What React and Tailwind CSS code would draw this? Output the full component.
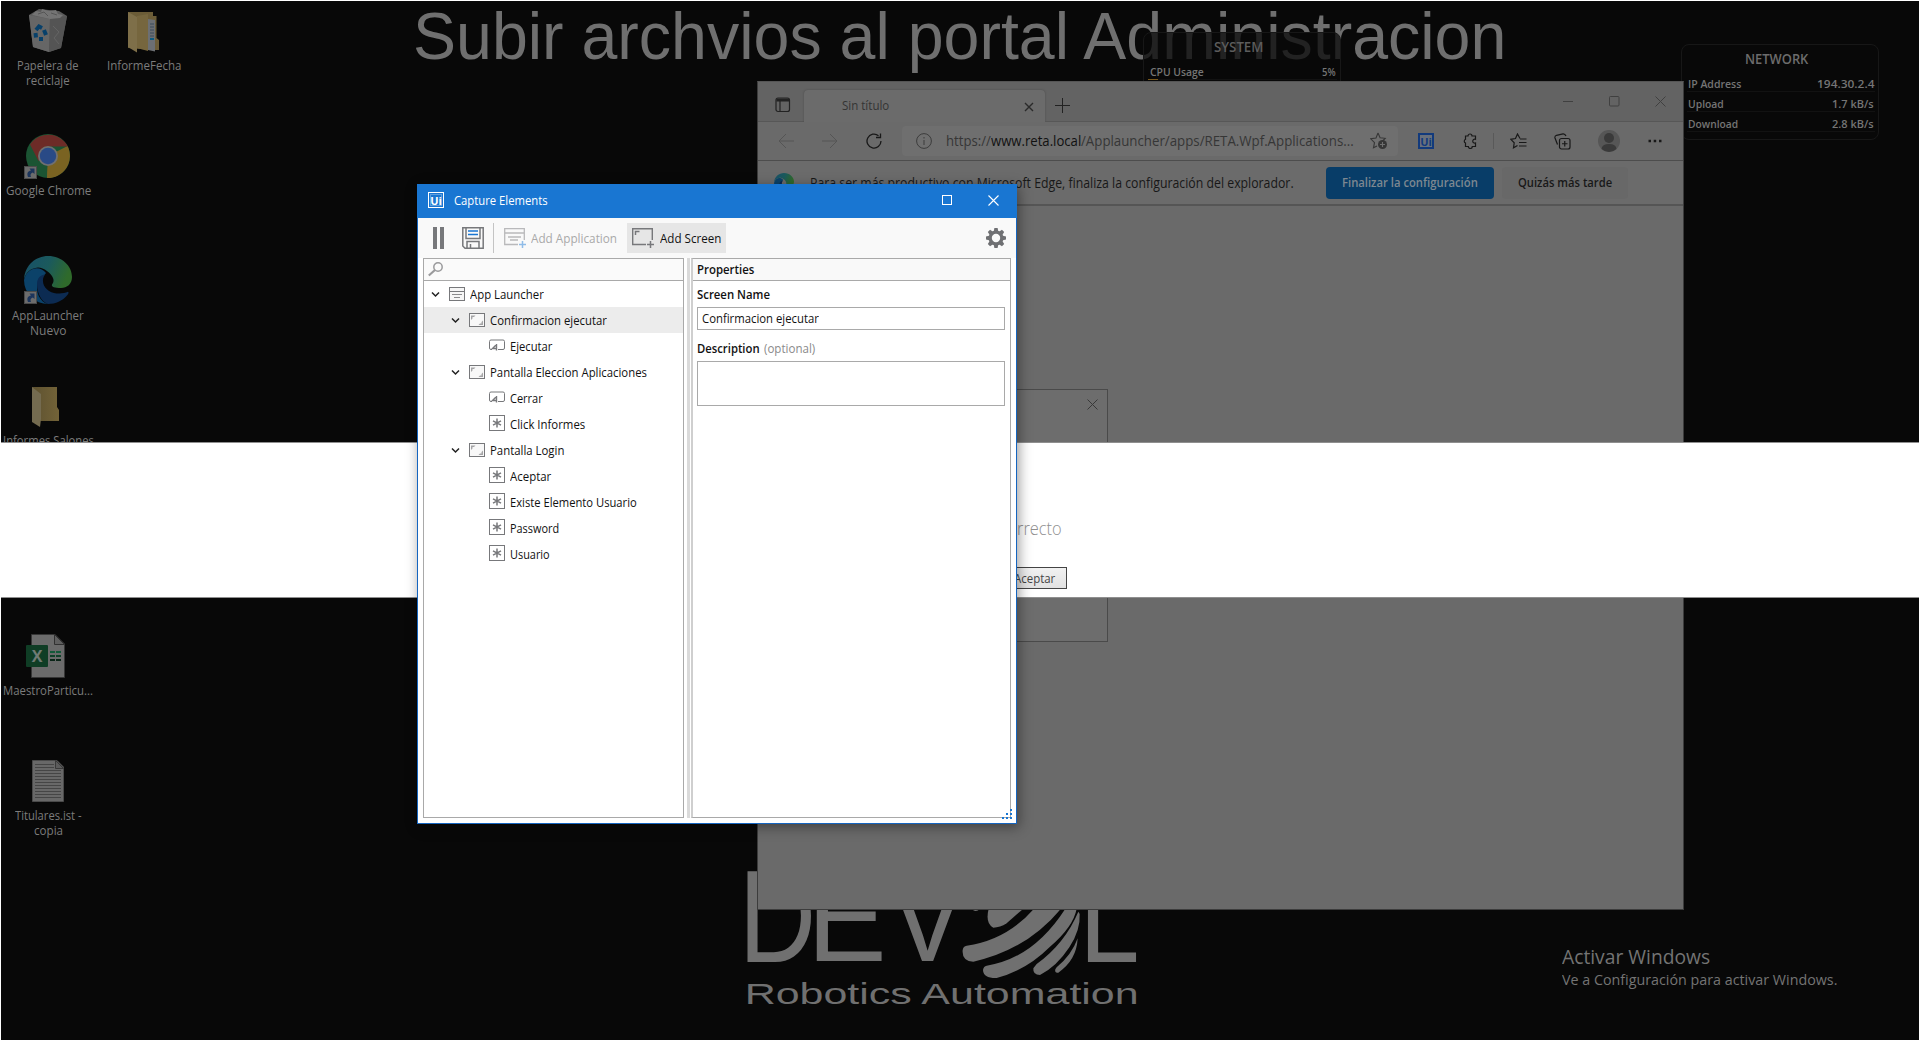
import React, { useLayoutEffect, useRef, useState } from "react";

/* Text squeezed or stretched horizontally to a given width. */
function Fit({ w, className = "", children }) {
  const ref = useRef(null);
  const [scale, setScale] = useState(1);
  useLayoutEffect(() => {
    if (ref.current.offsetWidth) setScale(w / ref.current.offsetWidth);
  }, [w]);
  return (
    <span className={"block shrink-0 whitespace-nowrap " + className} style={{ width: w }}>
      <span ref={ref} className="inline-block origin-left" style={{ transform: `scaleX(${scale})` }}>
        {children}
      </span>
    </span>
  );
}

/* ---------- desktop icons ---------- */
function Shortcut() {
  return (
    <g>
      <rect x="0.5" y="35.5" width="12" height="12" fill="#6c6c6c" stroke="#4a4a4a" />
      <path d="M4 46 C2.5 42 4 40 7 39.5 L5.5 37.5 H10.5 V43 L8.8 41.6 C6.5 42.5 6 44 7 46Z" fill="#1c355c" />
    </g>
  );
}
function BinIcon() {
  return (
    <svg width="48" height="48" viewBox="0 0 48 48">
      <path d="M5 9 L15 3 L35 5 L43 10 L37 42 L25 46 L9 41Z" fill="#5a5a5a" />
      <path d="M5 9 L26 13 L25 46 L9 41Z" fill="#666" />
      <path d="M26 13 L43 10 L37 42 L25 46Z" fill="#545454" />
      <path d="M8 9 L12 5 L17 6 L18 3 L25 5 L32 4 L34 8 L39 9 L36 12 L26 13Z" fill="#747474" />
      <path d="M14 8 L20 6 L24 10 M27 7 L33 9" stroke="#555" fill="none" />
      <path d="M29 20 L35 26 L30 32 L35 38" stroke="#646464" fill="none" />
      <g fill="none" stroke="#07406a" strokeWidth="4">
        <path d="M12 24 L15 20.500 L18 22" />
        <path d="M20 24 L22 29" />
        <path d="M19 33 L15 33" />
        <path d="M11.500 27 L12 31.500" />
      </g>
    </svg>
  );
}
function FolderIcon({ docs }) {
  return docs ? (
    <svg width="48" height="48" viewBox="0 0 48 48">
      <path d="M8 6 H33 V10 H36.500 V32 L39 34 V44 H33 L8 42Z" fill="#6b5c37" />
      <path d="M28 13 L35 14 V45.500 L28 44Z" fill="#6c6f73" />
      <path d="M30 18 H34 M30 21 H34 M30 24 H34 M30 27 H34 M30 30 H34" stroke="#3b4c5c" />
      <path d="M30 33 H34" stroke="#0e5b80" strokeWidth="2" />
      <path d="M17 10 L28 8 V45 L17 42Z" fill="#76663e" />
      <path d="M8 6 L17 11 V46.500 L8 41Z" fill="#7e6f49" />
    </svg>
  ) : (
    <svg width="48" height="48" viewBox="0 0 48 48">
      <defs>
        <linearGradient id="fold" x1="0" x2="1">
          <stop offset="0" stopColor="#5d5130" />
          <stop offset="1" stopColor="#736338" />
        </linearGradient>
      </defs>
      <path d="M8 6 H33 V26 L35 29 V40 H16Z" fill="url(#fold)" />
      <path d="M8 6 L17 13 V38 L16 46 L8 41Z" fill="#746b50" />
    </svg>
  );
}
function ChromeIcon() {
  return (
    <svg width="48" height="48" viewBox="0 0 48 48">
      <circle cx="24" cy="25" r="22" fill="#1b5433" />
      <path d="M24 25 L43.500 15 A22 22 0 0 1 23 47Z" fill="#7a6322" />
      <path d="M14.500 30 L6 13.500 A22 22 0 0 1 43.800 15.500 H24Z" fill="#6d2b27" />
      <path d="M24 34 L29.500 32 L23 47Z" fill="#7a6322" />
      <circle cx="24" cy="25" r="10" fill="#707070" />
      <circle cx="24" cy="25" r="8.200" fill="#294a86" />
      <Shortcut />
    </svg>
  );
}
function EdgeLogo({ size, shortcut, id }) {
  return (
    <svg width={size} height={size} viewBox="0 0 48 48" className="shrink-0">
      <defs>
        <linearGradient id={id} x1="0" x2="1" y2="0.3">
          <stop offset="0" stopColor="#17506a" />
          <stop offset="0.55" stopColor="#1b5a5c" />
          <stop offset="1" stopColor="#2f6a2b" />
        </linearGradient>
      </defs>
      <path d="M0 24 A24 24 0 0 0 24 48 C16 46 11 36 14 27 L22 17 C16 9 3 11 0 24Z" fill="#0b4269" />
      <path
        d="M0 23 C1 9 12 0 24 0 C38 0 48 10 48 21 C48 28 43 32 37 32 C31 32 27 31 28 28.500 C30 26 29.800 24 29 22 C27 17 20 11.500 14 11.500 C6 12 2 17 0 23Z"
        fill={`url(#${id})`}
      />
      <path
        d="M13 28 C13 22 17 18.500 21 18.500 C17 24 19 31 25 35 C31 38.500 39 38 44 35.800 C45.200 36.500 44.500 38 43 39.500 C38 45 32 48 24 48 C18 46 13 38 13 28Z"
        fill="#0c2b52"
      />
      {shortcut && <Shortcut />}
    </svg>
  );
}
function ExcelIcon() {
  return (
    <svg width="48" height="48" viewBox="0 0 48 48">
      <path d="M7.500 3.500 H31 L40.500 13 V46.500 H7.500Z" fill="#6b6b6b" stroke="#363636" />
      <path d="M30.500 3.500 V13.500 H40.500Z" fill="#5f5f5f" stroke="#303030" />
      <rect x="2" y="14" width="22" height="22" rx="1" fill="#0f3d25" />
      <path d="M26 21 H31 M32 21 H37" stroke="#145a3a" strokeWidth="2" />
      <path d="M26 25 H31 M32 25 H37" stroke="#0f4129" strokeWidth="2" />
      <path d="M26 29 H31 M32 29 H37" stroke="#0b2518" strokeWidth="2" />
      <text x="13" y="31" textAnchor="middle" fontFamily="Open Sans, sans-serif" fontWeight="700" fontSize="16" fill="#707a74">
        X
      </text>
    </svg>
  );
}
function TextFileIcon() {
  return (
    <svg width="48" height="48" viewBox="0 0 48 48">
      <path d="M8.500 4.500 H33 L39.500 11 V45.500 H8.500Z" fill="#686868" stroke="#4a4a4a" />
      <path
        d="M11 8.500 H30 M11 11.500 H30 M11 14.500 H37 M11 17.500 H37 M11 20.500 H37 M11 23.500 H37 M11 26.500 H37 M11 29.500 H37 M11 32.500 H37 M11 35.500 H37 M11 38.500 H37 M11 41.500 H37"
        stroke="#454545"
      />
      <path d="M31.500 4.500 V12.500 H39.500Z" fill="#5c5c5c" stroke="#3a3a3a" />
    </svg>
  );
}

function DesktopItem({ icon, lines = [] }) {
  return (
    <div className="flex h-[125px] w-24 shrink-0 flex-col items-center text-[12px] leading-[15px] text-[#7c7c7c]">
      <div className="mb-1 h-12 w-12">{icon}</div>
      {lines.map(([t, w]) => (
        <Fit key={t} w={w}>
          {t}
        </Fit>
      ))}
    </div>
  );
}

/* ---------- wallpaper ---------- */
function Wallpaper() {
  return (
    <>
      <div className="absolute left-[413px] top-[3px] font-['Liberation_Sans',sans-serif] text-[66.500px] leading-[66px] text-[#6f6f6f]">
        <Fit w={1093}>Subir archvios al portal Administracion</Fit>
      </div>
      <svg
        className="absolute left-[740px] top-[860px]"
        width="400"
        height="160"
        viewBox="240 300 1200 480"
        fill="#707070"
        fontFamily="Liberation Sans, Arial, sans-serif"
      >
        <g fontSize="376">
          <text x="236" y="605" fontSize="395" textLength="232" lengthAdjust="spacingAndGlyphs">D</text>
          <text x="441" y="603" textLength="239" lengthAdjust="spacingAndGlyphs">E</text>
          <text x="688" y="603" textLength="230" lengthAdjust="spacingAndGlyphs">V</text>
          <text x="1257" y="605" textLength="182" lengthAdjust="spacingAndGlyphs">L</text>
        </g>
        <text x="254" y="732" fontSize="87" textLength="1182" lengthAdjust="spacingAndGlyphs">
          Robotics Automation
        </text>
        <path d="M935 446 H960 Q950 457 940 451Z" />
        <path d="M986 446 Q975 490 1000 503 Q1020 503 1040 490 L1090 446Z" />
        <path d="M920 557 Q1040 540 1122 446 L1203 446 Q1100 570 940 605 Q905 603 908 570 Q910 558 920 557Z" />
        <path d="M980 617 Q1120 595 1216 446 L1250 446 Q1240 500 1170 560 Q1100 630 1010 654 Q970 655 969 630 Q971 618 980 617Z" />
        <path d="M1130 612 Q1215 550 1255 455 L1259 462 Q1262 510 1228 562 Q1190 620 1140 645 Q1118 645 1120 625Z" />
        <path d="M1190 622 Q1235 585 1253 535 Q1250 600 1195 638 Q1183 640 1186 628Z" />
      </svg>
      <div className="absolute left-[1562px] top-[942px] text-[#747474]">
        <Fit w={148} className="text-[19.500px] leading-[30px]">Activar Windows</Fit>
        <Fit w={275} className="text-[14.500px] leading-[16px]">Ve a Configuración para activar Windows.</Fit>
      </div>
    </>
  );
}

/* ---------- gadgets ---------- */
function GadgetRow({ label, lw, value, vw }) {
  return (
    <div className="flex h-5 items-center justify-between border-b border-[#121212] px-px pt-[5px] text-[11.500px] font-semibold leading-[16px] text-[#757575]">
      <Fit w={lw}>{label}</Fit>
      <Fit w={vw}>{value}</Fit>
    </div>
  );
}
function Gadgets() {
  return (
    <>
      <div className="absolute left-[1143px] top-[32px] h-[90px] w-[198px] rounded-lg border border-[#171717] bg-[#080808]/75 pl-[5px] pr-[3px]">
        <div className="flex h-[27px] items-center justify-center pr-[10px] pt-[2px] text-[13.500px] font-semibold text-[#5c5c5c]">
          <Fit w={49}>SYSTEM</Fit>
        </div>
        <GadgetRow label="CPU Usage" lw={54} value="5%" vw={14} />
        <div className="-ml-px -mt-px h-px w-[10px] bg-[#7a5a1c]" />
      </div>
      <div className="absolute left-[1681px] top-[44px] h-[96px] w-[198px] rounded-lg border border-[#171717] pl-[5px] pr-[3px]">
        <div className="flex h-[27px] items-center justify-center pr-[10px] pt-[2px] text-[13.500px] font-semibold text-[#6c6c6c]">
          <Fit w={63}>NETWORK</Fit>
        </div>
        <GadgetRow label="IP Address" lw={53} value="194.30.2.4" vw={57} />
        <GadgetRow label="Upload" lw={36} value="1.7 kB/s" vw={42} />
        <GadgetRow label="Download" lw={50} value="2.8 kB/s" vw={42} />
      </div>
    </>
  );
}

/* ---------- browser ---------- */
function Glyph({ size = 16, children, className = "", sw = 1 }) {
  return (
    <svg
      width={size}
      height={size}
      viewBox={`0 0 ${size} ${size}`}
      fill="none"
      stroke="currentColor"
      strokeWidth={sw}
      className={"shrink-0 " + className}
    >
      {children}
    </svg>
  );
}
function BrowserWindow() {
  return (
    <div className="absolute left-[757px] top-[81px] flex h-[829px] w-[927px] flex-col border border-[#3c3c3c] border-t-[#555] bg-[#6a6a6a] text-[#181818]">
      <div className="flex h-[40px] shrink-0 bg-[#636363]">
        <div className="flex w-[46px] items-center border-b border-[#575757] pl-[17px]">
          <Glyph sw={1.2} className="mt-[7px] text-[#222]">
            <rect x="1" y="1" width="13.500" height="13.500" rx="2" />
            <path d="M1.500 3 H14" strokeWidth="3" />
            <path d="M5 4 V14" />
          </Glyph>
        </div>
        <div className="mt-2 flex w-[241px] items-center rounded-t bg-[#6b6b6b] pl-[38px] text-[12px] text-[#343434] shadow-[0_0_2px_#4a4a4a]">
          <Fit w={47}>Sin título</Fit>
          <Glyph size={10} sw={1.4} className="ml-[135px] mt-px text-[#2a2a2a]">
            <path d="M1 1 L9 9 M9 1 L1 9" />
          </Glyph>
        </div>
        <div className="flex flex-1 items-center border-b border-[#575757] pl-[10px]">
          <Glyph size={15} className="mt-[8px] text-[#222]">
            <path d="M7.500 0 V15 M0 7.500 H15" />
          </Glyph>
          <div className="ml-auto flex gap-[35px] pr-[17px] text-[#404040]">
            <Glyph size={11}><path d="M0 5.500 H10" /></Glyph>
            <Glyph size={11}><rect x="0.5" y="0.5" width="9.500" height="9.500" rx="1" /></Glyph>
            <Glyph size={11}><path d="M0.500 0.500 L10.500 10.500 M10.500 0.500 L0.500 10.500" /></Glyph>
          </div>
        </div>
      </div>
      <div className="flex h-[39px] shrink-0 items-center border-b border-[#4d4d4d] bg-[#6a6a6a] pl-[20px]">
        <Glyph className="text-[#555]"><path d="M16 8 H1 M8 1 L1 8 L8 15" /></Glyph>
        <Glyph className="ml-7 text-[#555]"><path d="M0 8 H15 M8 1 L15 8 L8 15" /></Glyph>
        <Glyph className="ml-7" sw={1.3}><path d="M15 8 A7 7 0 1 1 12.500 2.700 M14.500 0.500 V4.500 H10" /></Glyph>
        <div className="ml-5 flex h-[30px] w-[496px] items-center rounded bg-[#6f6f6f] pl-[14px] text-[14px] text-[#363636]">
          <Glyph className="text-[#3c3c3c]">
            <circle cx="8" cy="8" r="7.400" />
            <path d="M8 7 V12 M8 4 V5.500" />
          </Glyph>
          <Fit w={45} className="ml-[14px] -mt-px">https://</Fit>
          <Fit w={90} className="-mt-px text-[#111]">www.reta.local</Fit>
          <Fit w={273} className="-mt-px">/Applauncher/apps/RETA.Wpf.Applications...</Fit>
          <Glyph size={18} sw={1.1} className="ml-4">
            <path d="M8 1 L10.100 5.700 L15.200 6.300 L12 9.500 M7 14 L3.500 15.800 L4.500 10.600 L0.800 6.800 L6 6 L8 1" />
            <circle cx="12.500" cy="12.500" r="4.500" fill="currentColor" stroke="none" />
            <path d="M12.500 10 V15 M10 12.500 H15" stroke="#6f6f6f" />
          </Glyph>
        </div>
        <div className="ml-5 flex h-4 w-4 items-center justify-center border-2 border-[#123a7c] bg-[#68707c] text-[11px] font-bold leading-none text-[#123a7c]">Ui</div>
        <Glyph className="ml-[28px]" sw={1.2}>
          <path d="M3.500 3 H6 A2 2 0 0 1 10 3 H13.500 V6.300 A2 2 0 1 0 13.500 10 V13.500 H10.300 A2 2 0 0 1 6.300 13.500 H3.500 V10 A2 2 0 0 1 3.500 6.300Z" />
        </Glyph>
        <div className="ml-[15px] h-4 w-px bg-[#595959]" />
        <Glyph size={17} className="ml-[16px]" sw={1.2}>
          <path d="M10 5.500 L7.500 1 L5.500 5.500 L0.800 6.300 L4.200 9.800 L3.500 14.800 L7.500 12.500" />
          <path d="M10 6 H16.500 M9 9.500 H16.500 M9 13 H16.500" />
        </Glyph>
        <Glyph size={17} className="ml-[27px]" sw={1.2}>
          <rect x="5.500" y="5.500" width="10.500" height="10.500" rx="2" />
          <path d="M10.750 8 V13.500 M8 10.750 H13.500 M3.500 11.500 L1 5 Q0.500 3 2.500 2.300 L9 0.800 Q11 0.600 12 3" />
        </Glyph>
        <svg width="22" height="22" viewBox="0 0 22 22" className="ml-[27px] shrink-0">
          <circle cx="11" cy="11" r="11" fill="#565656" />
          <circle cx="11" cy="8" r="5" fill="#3a3a3a" />
          <path d="M3.500 19 Q4 14 11 14 Q18 14 18.500 19 Q11 25 3.500 19Z" fill="#3a3a3a" />
        </svg>
        <Glyph size={14} className="ml-[28px]">
          <path d="M0.500 7 H3 M5.700 7 H8.200 M11 7 H13.500" strokeWidth="2.400" />
        </Glyph>
      </div>
      <div className="flex h-[45px] shrink-0 items-center border-b-2 border-[#555] bg-[#6b6b6b] pl-[16px] text-[14px]">
        <EdgeLogo size={20} id="edge-small" />
        <Fit w={484} className="-mt-px ml-[16px]">Para ser más productivo con Microsoft Edge, finaliza la configuración del explorador.</Fit>
        <div className="ml-8 flex h-8 w-[168px] items-center justify-center rounded-sm bg-[#083d68] text-[13px] font-semibold text-[#7d8891]">
          <Fit w={136}>Finalizar la configuración</Fit>
        </div>
        <div className="ml-2 flex h-8 w-[126px] items-center justify-center rounded-sm bg-[#686868] text-[13px] font-semibold">
          <Fit w={94}>Quizás más tarde</Fit>
        </div>
      </div>
      <div className="flex-1 overflow-hidden pt-[183px]">
        <div className="flex h-[253px] w-[350px] justify-end border border-[#4a4a4a] bg-[#6d6d6d] pr-[9px] pt-[9px] text-[#383838]">
          <Glyph size={11}><path d="M0.500 0.500 L10.500 10.500 M10.500 0.500 L0.500 10.500" /></Glyph>
        </div>
      </div>
    </div>
  );
}

/* Bright strip of the screen that is not dimmed. */
function HighlightBand() {
  return (
    <div className="absolute left-0 top-[442px] h-[156px] w-full border-y border-[#8f8f8f] bg-white pl-[1007px]">
      <div className="flex w-[60px] flex-col items-end">
        <Fit w={45} className="mr-[5px] mt-[72px] text-[17.500px] font-light leading-[26px] text-[#8f8f8f]">rrecto</Fit>
        <div className="mt-[26px] flex h-[22px] w-full items-center justify-end border border-[#444] bg-linear-to-b from-[#f1f1f1] to-[#e2e2e2] pr-[11px] pt-px text-[12px] text-[#444]">
          <Fit w={41}>Aceptar</Fit>
        </div>
      </div>
    </div>
  );
}

/* ---------- capture window ---------- */
function AppIcon() {
  return (
    <Glyph className="text-[#77787b]">
      <rect x="0.5" y="1.500" width="15" height="13" fill="#f6f6f6" />
      <path d="M1 5.500 H15" />
      <path d="M3 8.500 H13 M5 11.500 H11" stroke="#8a8a8c" />
    </Glyph>
  );
}
function ScreenIcon() {
  return (
    <Glyph className="text-[#77787b]">
      <rect x="0.5" y="1.500" width="15" height="13" fill="#f8f8f8" />
      <path d="M2 8 V3.500 H6.500 L5 5 H3.500 V6.500Z M14 8.500 V13 H9.500 L11 11.500 H12.500 V10Z" fill="#a4a4a6" stroke="none" />
    </Glyph>
  );
}
function ButtonIcon() {
  return (
    <Glyph className="text-[#77787b]">
      <path d="M3 11.500 H2 Q0.500 11.500 0.500 10 V3.500 Q0.500 2 2 2 H14 Q15.500 2 15.500 3.500 V10 Q15.500 11.500 14 11.500 H9" />
      <path d="M7.500 6 V12.500 M7.500 6.500 L3.500 10.500 H7" strokeWidth="1.400" />
    </Glyph>
  );
}
function AnyIcon() {
  return (
    <Glyph className="-mt-[2px] text-[#77787b]">
      <rect x="0.5" y="0.5" width="15" height="15" fill="#fff" />
      <path d="M8 3.500 V12.500 M4 5.800 L12 10.200 M12 5.800 L4 10.200" strokeWidth="1.500" />
    </Glyph>
  );
}

const tree = [
  { depth: 0, open: true, icon: <AppIcon />, label: "App Launcher", w: 74 },
  { depth: 1, open: true, icon: <ScreenIcon />, label: "Confirmacion ejecutar", w: 117, selected: true },
  { depth: 2, icon: <ButtonIcon />, label: "Ejecutar", w: 42 },
  { depth: 1, open: true, icon: <ScreenIcon />, label: "Pantalla Eleccion Aplicaciones", w: 157 },
  { depth: 2, icon: <ButtonIcon />, label: "Cerrar", w: 33 },
  { depth: 2, icon: <AnyIcon />, label: "Click Informes", w: 75 },
  { depth: 1, open: true, icon: <ScreenIcon />, label: "Pantalla Login", w: 74 },
  { depth: 2, icon: <AnyIcon />, label: "Aceptar", w: 41 },
  { depth: 2, icon: <AnyIcon />, label: "Existe Elemento Usuario", w: 127 },
  { depth: 2, icon: <AnyIcon />, label: "Password", w: 49 },
  { depth: 2, icon: <AnyIcon />, label: "Usuario", w: 40 },
];
const indent = ["pl-[7px]", "pl-[27px]", "pl-[47px]"];

function TreeRow({ depth, open, icon, label, w, selected }) {
  return (
    <div className={"flex h-[26px] items-center " + indent[depth] + (selected ? " bg-[#ececec]" : "")}>
      <div className="mr-[8px] w-[10px]">
        {open && (
          <svg width="10" height="8" viewBox="0 0 10 8" fill="none" stroke="#222" strokeWidth="1.500">
            <path d="M1 2.500 L4.500 6 L8 2.500" />
          </svg>
        )}
      </div>
      {icon}
      <Fit w={w} className="ml-[5px] mt-px">{label}</Fit>
    </div>
  );
}

function CaptureWindow() {
  return (
    <div className="absolute left-[417px] top-[184px] flex h-[640px] w-[600px] flex-col border border-[#1565c0] bg-white text-[12px] text-[#111] shadow-[2px_3px_12px_rgba(0,0,0,0.4)]">
      <div className="-mx-px -mt-px flex h-[34px] shrink-0 items-center bg-[#1976d2] pl-[11px] text-white">
        <div className="-mt-[2px] flex h-4 w-4 items-center justify-center border border-white text-[11px] font-bold leading-none outline-1 -outline-offset-3 outline-white/30">
          Ui
        </div>
        <Fit w={94} className="ml-[10px]">Capture Elements</Fit>
        <Glyph size={10} className="-mt-[2px] ml-[394px]"><rect x="0.5" y="0.5" width="9" height="9" /></Glyph>
        <Glyph size={11} className="-mt-[2px] ml-[36px]" sw={1.100}><path d="M0.500 0.500 L10.500 10.500 M10.500 0.500 L0.500 10.500" /></Glyph>
      </div>
      <div className="flex h-[40px] shrink-0 items-center bg-[#f9f9f9] pl-[15px] pr-[10px]">
        <svg width="11" height="22" viewBox="0 0 11 22" fill="#77787b">
          <path d="M0 0 H4 V22 H0Z M7 0 H11 V22 H7Z" />
        </svg>
        <Glyph size={22} sw={1.500} className="ml-[18px] text-[#77787b]">
          <path d="M0.800 0.800 H21.200 V21.200 H3 L0.800 19Z" />
          <path d="M4 1 V11.500 H18 V1" />
          <path d="M6 4 H16 M6 7.500 H16" stroke="#1976d2" strokeWidth="1.500" />
          <path d="M5 21 V14.500 H17 V21 M8.500 17 V21" />
        </Glyph>
        <div className="ml-[9px] h-[30px] w-px bg-[#c4c4c4]" />
        <Glyph size={22} sw={1.300} className="ml-[10px] text-[#b9b9bb]">
          <path d="M14 17.500 H0.700 V1.700 H20.300 V13 M0.700 6 H20.300 M4 10 H17 M6 13 H14" />
          <path d="M18.500 14 V21 M15 17.500 H22" stroke="#8fbce8" strokeWidth="1.500" />
        </Glyph>
        <Fit w={86} className="ml-[5px] mt-[2px] text-[#a9a9a9]">Add Application</Fit>
        <div className="ml-[10px] flex h-[30px] w-[99px] items-center bg-[#e6e6e6] pl-[5px]">
          <Glyph size={22} sw={1.400} className="text-[#77787b]">
            <path d="M14 17.500 H0.700 V1.700 H20.300 V13" />
            <path d="M3.500 8 V4.500 H7.500" strokeWidth="1.500" />
            <path d="M18.500 14 V21 M15 17.500 H22" strokeWidth="1.500" />
          </Glyph>
          <Fit w={61} className="ml-[6px] mt-[2px]">Add Screen</Fit>
        </div>
        <svg width="20" height="20" viewBox="0 0 20 20" className="ml-auto">
          <g fill="#6f7073">
            {[0, 45, 90, 135, 180, 225, 270, 315].map((a) => (
              <path key={a} d="M7.600 4 L8.400 0 H11.600 L12.400 4Z" transform={`rotate(${a} 10 10)`} />
            ))}
          </g>
          <circle cx="10" cy="10" r="5.800" fill="none" stroke="#6f7073" strokeWidth="3.200" />
        </svg>
      </div>
      <div className="flex flex-1 pb-[5px] pl-[5px] pr-[5px]">
        <div className="flex w-[261px] flex-col border border-[#a9a9a9]">
          <div className="flex h-[22px] items-center border-b border-[#a9a9a9] bg-[#fafafa] pl-[4px]">
            <Glyph size={15} className="text-[#9a9a9c]">
              <circle cx="10" cy="5" r="4.200" strokeWidth="1.500" />
              <path d="M7 8 L0.800 13.500" strokeWidth="2.200" />
            </Glyph>
          </div>
          {tree.map((r) => (
            <TreeRow key={r.label} {...r} />
          ))}
        </div>
        <div className="ml-[3px] w-[3px] bg-[#dadada]" />
        <div className="ml-px flex flex-1 flex-col border border-l-2 border-[#a9a9a9] border-l-[#cfcfcf]">
          <div className="flex h-[22px] items-center border-b border-[#a9a9a9] bg-[#f9f9f9] pl-[4px] font-semibold">
            <Fit w={57}>Properties</Fit>
          </div>
          <div className="flex flex-col pl-[4px] pr-[5px]">
            <Fit w={73} className="h-[26px] pt-px font-semibold leading-[26px]">Screen Name</Fit>
            <div className="flex h-[23px] items-center border border-[#a9a9a9] pl-[4px]">
              <Fit w={117}>Confirmacion ejecutar</Fit>
            </div>
            <div className="mt-[5px] flex h-[26px] items-center pt-[2px]">
              <Fit w={63} className="font-semibold">Description</Fit>
              <Fit w={51} className="ml-[4px] text-[#8a8a8a]">(optional)</Fit>
            </div>
            <div className="h-[45px] border border-[#a9a9a9]" />
          </div>
        </div>
      </div>
      <svg className="absolute bottom-[4px] right-[4px]" width="10" height="10" fill="#1976d2">
        <path d="M8 0h2v2h-2z M4 4h2v2h-2z M8 4h2v2h-2z M0 8h2v2h-2z M4 8h2v2h-2z M8 8h2v2h-2z" />
      </svg>
    </div>
  );
}

export default function App() {
  return (
    <div className="relative h-[1040px] w-[1920px] overflow-hidden bg-[#080808] font-['Open_Sans',sans-serif]">
      <Wallpaper />
      <Gadgets />
      <div className="flex pt-[6px]">
        <div className="flex flex-col">
          <DesktopItem icon={<BinIcon />} lines={[["Papelera de", 62], ["reciclaje", 44]]} />
          <DesktopItem icon={<ChromeIcon />} lines={[["Google Chrome", 85]]} />
          <DesktopItem icon={<EdgeLogo size={48} shortcut id="edge-big" />} lines={[["AppLauncher", 72], ["Nuevo", 36]]} />
          <DesktopItem icon={<FolderIcon />} lines={[["Informes Salones", 91]]} />
          <DesktopItem />
          <DesktopItem icon={<ExcelIcon />} lines={[["MaestroParticu...", 90]]} />
          <DesktopItem icon={<TextFileIcon />} lines={[["Titulares.ist -", 67], ["copia", 29]]} />
        </div>
        <DesktopItem icon={<FolderIcon docs />} lines={[["InformeFecha", 74]]} />
      </div>
      <BrowserWindow />
      <HighlightBand />
      <div className="pointer-events-none absolute inset-0 border-x border-t border-white" />
      <CaptureWindow />
    </div>
  );
}
